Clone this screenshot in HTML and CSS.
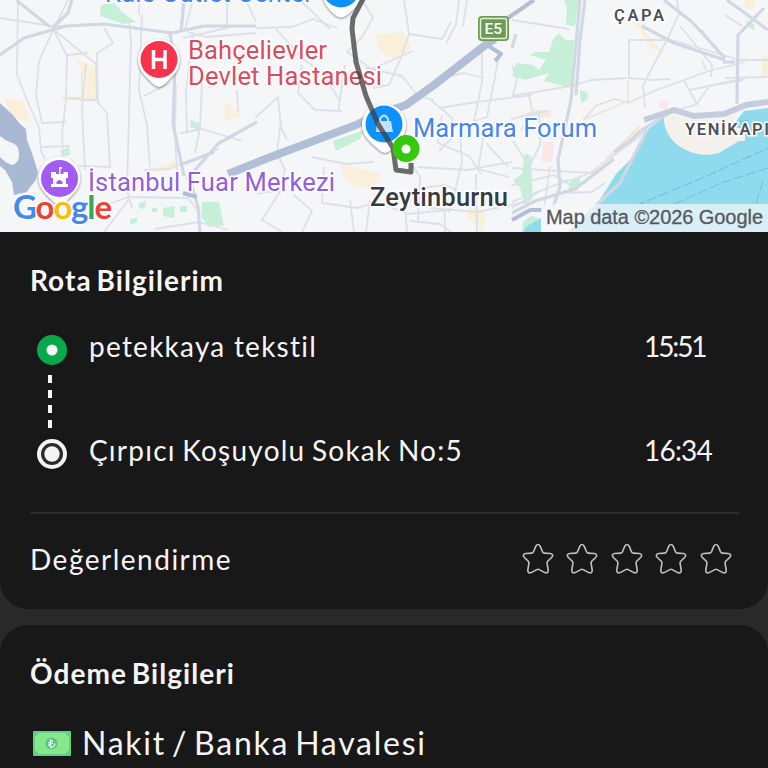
FILE: index.html
```html
<!DOCTYPE html>
<html lang="tr">
<head>
    <meta charset="UTF-8">
    <meta name="viewport" content="width=device-width, initial-scale=1.0">
    <title>Rota Bilgilerim</title>
    <link rel="stylesheet" href="styles.css">
</head>
<body>
    <svg class="map" viewBox="0 0 768 232">
        <rect class="land" width="768" height="232"/>

        <g class="ground">
            <!-- built up areas -->
            <g class="sand">
                <path d="M4 98l18 2 10 22-20-4zM74 56l22 14 2 32-12-2v-22zM225 102l18 14-18 4zM375 35l28-3 9 17-17 11-15-9zM340 164l40 10-8 16-25-8zM153 168l21-6 2 5-21 6zM638 25l15 16 13 14-16-7zM762 55h6v22h-6zM606 157l35-32-2 7-32 27zM470 202l16 12-3 18-16-16zM635 22l11 2-1 6-10-2zM746 0h10l-4 10-9-3z"/>
            </g>
            <path class="pink" d="M533 110h18v7h-18zM543 142h11l-2 20h-10zM660 101h9l-2 8h-8z"/>

            <!-- parks -->
            <g class="park">
                <path d="M101 5l13-2 9 10 13 9-12 2-24-8zM191 120l10 4-2 6-9-3zM60 151l9-4 1 8-8 2zM202 202h17l5 24-15 1-8-10zM163 208l12-2-1 12-11-2zM139 203l7-2-1 8-6-1zM180 206h7v6h-7zM152 208h5v4h-5zM130 219l7-1v5l-7 1z"/>
                <path d="M333 141l31-11-4 9-24 12zM564 0h15l-4 26-9-1 1-17zM553 40l5-7 8 7 8 0-1 43-5 4-24-6 5-8-24 7-13-4 4-13 17 2 6 5 7-10-16-5 5-3 14 0zM580 90l7 2 1 7-6 4-2-6zM525 153l7 4-1 7 2 34-8 7-5-17-7-8 9-6zM570 182l10-6 1 9-8 7-5-1zM745 20l9 4 0 7-6-5zM523 222l8-6 8 2-8 10-9 4z"/>
            </g>

            <!-- sea -->
            <path class="sea" d="M664 117l-17 13-11 24-20 20-8 13-11 17-15 14-14 14h200V108l-24 3-10 13-40 11z"/>
            <path class="sea" d="M527 226l14-8v14h-18z"/>
            <path class="coast" d="M664 116v6q3 18 20 27 17 9 35 4l20-12h6v-13h-8l-4-8 4-7-9 2-10 6-36-3-10-4z"/>
            <path class="ferry" d="M635 206l67-28 66-30M674 204l50-22 44-14M763 181l-7 23M751 130l10-5M739 122l14-3"/>

            <!-- small streets -->
            <g class="street">
                <path d="M18 0l-1 75 12 30 10 22 2 24 4 8M68 0l-15 30-14 31-3 34 6 28 24-1M0 18l52 8 13 0M53 29l14 27-1 43-4 35 1 20M67 55l21-2M86 64l-4 46 3 60M80 100l17 0-1-36-42-34M63 98l18 0M42 147l27-1M104 28l9 15-16 10 1 50 9 10 3 54-31-1M129 22l2 18-4 150 5 18M142 14l-3 76 8 35 3 42M139 0v15M144 96l26-13M193 0l-8 29M176 85l-1 45 2 48M202 83l-2 45-5 25M180 133l22-4 40 12M227 0v28l-44 10M237 90l1 22M144 170l25-1 50-20M104 206l24-9 60 1 8 11M104 232l26-34M155 229l44-7 29 8M193 32l-7 60 1 42M256 33l-49 4-20-5M246 0l10 22"/>
                <path d="M208 88l36-27M255 118l21-19 2-2 3 30 6 13M302 65l-4 28 17 17 27 1M345 65l-7 48M281 120l-4 33 8 17-6 20-22 4M256 28l36-1 21-8 24 9M275 28l28 31 20 14 16 27M300 0l30 29M362 0l11 18-11 19-15 15 25 17 41-18M404 0l5 34-7 21-13 30-16 3M409 34l33 5 9-17M459 0l-3 24-10 20M467 0l-4 26M366 68l36 8 16 20 16 4M431 100l21 18 2 18-15 15M450 76l14-3 20 5M482 52l0 30-8 39 13-4 4-20 8-41M440 108l30-5 62-8M442 115l-4 28 31 13 12 18M418 167l49 3 45-8M405 153l15 24-2 46M460 132l2 31-13 50M484 133l-6 36 31 8M486 143l22 24M476 174l1 58M423 188l22-3 12 5M444 185l1 47M430 208l47 4 49-10M281 190l-19 30 20 12M294 195l18 16-10 21M312 157l34 7 28-2M324 167l-2 36 36 5 17-6M350 199l4 33M370 200l-4 32M384 205l24 9 40-4M405 205l2 27M410 221l30 3 11 8"/>
                <path d="M512 20l57 9M512 65l5 14-4 16M512 96l59-10M571 86l20-6 36-2M628 78l26 2 16-1M629 77V40l43 0 68 20M511 119l36-8M529 96l4 18-12 16M539 110l1 35-10 20M513 141l15 24M583 120l14-15 18-6 13 4 26-12 55-20 36-9M677 0l2 14-12 26-13 24-11 22 2 21M680 26l32 39-1 12M702 60l4 10M684 81l13 23 12-18 34-6M698 104l-27 8M738 60h30M725 15l17 11M702 30l16 22M512 185l42-10 24 15M512 168l78 5 27-20 22-16 13-14M512 208l30-18 46-16M550 166l-6 43M562 193l30-1 13-9M690 90l56-12M725 78l42-1M512 202l56-22"/>
            </g>
            <g class="street tan">
                <path d="M64 99h30M82 71v28M628 81v20l-45 19M530 97l2 15-20 7M592 174l47-47"/>
            </g>

            <!-- main roads -->
            <g class="avenue">
                <path d="M0 55l24-17 42-12 38-2 68 9 32-7h52M52 28l16-15 4-13M50 27l-34-27M170 34l5 30-2 60 11 52M184 0l-3 32M180 165l32-12 2-1M187 179l32-36 38-21M192 186l6 21 2 25M580 0l-9 100-13 60 2 27-7 20M585 0l-5 40-4 55M512 48l4-14M642 26l32 17 51 17M664 0l28 22 33 36M727 0l41 30M764 8l-26 27-1 69M735 62h-12M590 211l30-28 27-53M614 152l16-11 13-12 25-15M512 213l23-12 40-12 39-30"/>
                <path class="thick" d="M644 120l30-10 20 6 30-2 22-9 22-3"/>
            </g>
            <path class="junction" d="M0 103l13 12 7 9 6 5 1 11 5 13 6 19-2 8-6 7-3 5-13 3-2-13-7-12-5-4v-9q8 8 13 8 7-3 6-13-1-8-9-10-6-2-10-6v-13z"/>
            <path class="highway" d="M228 174l40-16 88-33 18-9 32-11 28-20 54-42 7-4"/>
            <path class="highway thin" d="M484 43l17 11-6 7M508 18l26-18M512 220l18-10h12M183 193l14 4"/>
        </g>

        <!-- hospital -->
        <path class="pin" d="M159 39c-12 0-21 9-21 21 0 10 7 16 15 24q6 6 12 0c8-8 15-14 15-24 0-12-9-21-21-21z"/>
        <circle class="red" cx="159" cy="59.500" r="18.500"/>
        <path class="glyph-line" d="M153.500 50v19M165 50v19M153 59.500h12"/>

        <!-- fair center -->
        <path class="pin" d="M59.500 157c-12 0-21 9-21 21 0 10 7 16 15 24q6 6 12 0c8-8 15-14 15-24 0-12-9-21-21-21z"/>
        <circle class="purple" cx="59.500" cy="178.500" r="18.500"/>
        <path class="white" d="M51 172h5v2h3v-7h3v2h-1.500v5h3v-2h4.500v6h-2v6h2v3h-17v-3h2v-6h-2z"/>
        <path class="purple" d="M56.500 184v-2q3-4 6 0v2z"/>

        <!-- malls -->
        <path class="pin" d="M321-10q2 16 14 25 6 5 12 0 14-10 16-25z"/>
        <circle class="blue" cx="341" cy="-11" r="18.500"/>
        <path class="pin" d="M384 104c-13 0-22 9-22 21 0 11 9 18 17 25q6 6 12 0c8-7 15-14 15-25 0-12-9-21-22-21z"/>
        <circle class="blue" cx="384" cy="124" r="18.500"/>
        <path class="bag" d="M377 121h14l2 11h-17z"/>
        <path class="bag-handle" d="M380 122v-3q4-7 8 0v3"/>

        <g class="label">
            <text class="blue-text" x="105" y="2" textLength="208">Kale Outlet Center</text>
            <text class="red-text" x="188" y="59" textLength="139">Bahçelievler</text>
            <text class="red-text" x="188" y="85" textLength="194">Devlet Hastanesi</text>
            <text class="purple-text" x="88" y="191" textLength="247">İstanbul Fuar Merkezi</text>
            <text class="blue-text" x="413" y="137" textLength="184">Marmara Forum</text>
            <text class="town" x="370" y="206" textLength="138">Zeytinburnu</text>
            <text class="district" x="614" y="21" textLength="50">ÇAPA</text>
            <text class="district" x="685" y="135" textLength="84">YENİKAPI</text>
        </g>

        <rect class="shield" x="478" y="16" width="31" height="25" rx="4"/>
        <rect class="shield-line" x="480.500" y="18.500" width="26" height="20" rx="2"/>
        <text class="shield-text" x="484.500" y="34">E5</text>

        <path class="route" d="M363-1L353 18l-1 11 4 33 10 34 12 28 15 24 3 22 15 2v-9"/>
        <circle class="green" cx="406" cy="148.500" r="13.500"/>
        <circle class="white" cx="406" cy="149" r="4.500"/>

        <text class="google" x="13" y="219" textLength="99"><tspan class="g-blue">G</tspan><tspan class="g-red">o</tspan><tspan class="g-yellow">o</tspan><tspan class="g-blue">g</tspan><tspan class="g-green">l</tspan><tspan class="g-red">e</tspan></text>

        <rect class="credit-box" x="541" y="204" width="227" height="28"/>
        <text class="credit" x="546" y="224" textLength="217">Map data ©2026 Google</text>
    </svg>

    <div class="card route-card">
        <h2>Rota Bilgilerim</h2>
        <div class="stop">
            <svg class="dot" viewBox="0 0 30 30">
                <circle cx="15" cy="15" r="15" fill="#09a84b"/>
                <circle cx="15" cy="15" r="5.500" fill="#f5f5f5"/>
            </svg>
            <span class="place start">petekkaya tekstil</span>
            <span class="time early">15:51</span>
        </div>
        <div class="dashes"><i></i><i></i><i></i><i></i></div>
        <div class="stop">
            <svg class="dot" viewBox="0 0 30 30">
                <circle cx="15" cy="15" r="15" fill="#f5f5f5"/>
                <circle cx="15" cy="15" r="11" fill="#2b2b2b"/>
                <circle cx="15" cy="15" r="7.700" fill="#f5f5f5"/>
            </svg>
            <span class="place end">Çırpıcı Koşuyolu Sokak No:5</span>
            <span class="time late">16:34</span>
        </div>
        <div class="rating">
            <span class="rating-text">Değerlendirme</span>
            <div class="stars">
                <svg viewBox="0 0 32 32"><use href="#star"/></svg>
                <svg viewBox="0 0 32 32"><use href="#star"/></svg>
                <svg viewBox="0 0 32 32"><use href="#star"/></svg>
                <svg viewBox="0 0 32 32"><use href="#star"/></svg>
                <svg viewBox="0 0 32 32"><use href="#star"/></svg>
            </div>
        </div>
    </div>

    <div class="card pay-card">
        <h2>Ödeme Bilgileri</h2>
        <div class="payment">
            <svg class="cash" viewBox="0 0 38 25">
                <rect width="38" height="25" rx="1" fill="#5fd084"/>
                <path d="M5 2h28q0 3 3 3v15q-3 0-3 3H5q0-3-3-3V5q3 0 3-3z" fill="#86e78b"/>
                <circle cx="18.500" cy="12.500" r="6" fill="#56c485"/>
                <path d="M17.500 8v8.500q4 0 4.500-4M15 12l5-2.500M15 14.500l5-2.500" fill="none" stroke="#effff2" stroke-width="1.300"/>
            </svg>
            <span class="pay-text">Nakit / Banka Havalesi</span>
        </div>
    </div>

    <svg width="0" height="0" class="symbols">
        <symbol id="star" viewBox="0 0 32 32">
            <path d="M13.800 3.200Q16-.3 18.200 3.200L20.500 8.800Q21 10 22.200 10.100L28.300 10.500Q32.300 11.300 29.600 14.500L25.700 18.200Q24.900 19.100 25.100 20.300L26.200 27Q26.300 31 22.800 29.600L17.200 26.600Q16 26 14.800 26.600L9.200 29.600Q5.700 31 5.800 27L6.900 20.300Q7.100 19.100 6.300 18.200L2.400 14.500Q-.3 11.300 3.700 10.500L9.800 10.100Q11 10 11.500 8.800Z"/>
        </symbol>
    </svg>
</body>
</html>
```
FILE: styles.css
```css
html, body{
    height: 100%;
}

body{
    margin: 0;
    display: flex;
    flex-direction: column;
    overflow: hidden;
    background-color: #292929;
    color: #f5f5f5;
    font-family: Lato, "Noto Sans", sans-serif;
    font-size: 28px;
    line-height: 34px;
}

/* map */
.map{
    display: block;
    width: 100%;
    height: 232px;
    flex: none;
}

.ground{ filter: blur(0.6px); }
.land{ fill: #f5f6f8; }
.sand{ fill: #faefd9; }
.pink{ fill: #fae6e6; }
.park{ fill: #c5f0d7; }
.sea{ fill: #90daee; }
.coast{ fill: #f4f1ec; }
.ferry{
    fill: none;
    stroke: #73c4de;
    stroke-width: 1.2;
    stroke-dasharray: 10 3;
}

.street{
    fill: none;
    stroke: #dce1e9;
    stroke-width: 1.8;
    stroke-linejoin: round;
}
.tan{ stroke: #eee4d8; }

.avenue{
    fill: none;
    stroke: #d0d8e4;
    stroke-width: 3.2;
    stroke-linejoin: round;
}
.thick{
    stroke: #c3cddd;
    stroke-width: 6;
}
.junction{ fill: #a9b9d3; }

.highway{
    fill: none;
    stroke: #b0bed6;
    stroke-width: 8;
    stroke-linejoin: round;
}
.thin{ stroke-width: 4; }

.pin{
    fill: #fff;
    filter: drop-shadow(0 1px 1px rgba(0, 0, 0, 0.45));
}
.red{ fill: #f9334c; }
.purple{ fill: #a25bf3; }
.blue{ fill: #0e91fa; }
.green{ fill: #35c90b; }
.white{ fill: #fff; }

.glyph-line{
    fill: none;
    stroke: #fff;
    stroke-width: 3.5;
}
.bag{ fill: #c4e2fb; }
.bag-handle{
    fill: none;
    stroke: #c4e2fb;
    stroke-width: 2;
}

.label text{
    font-family: Roboto, sans-serif;
    font-size: 25.5px;
    stroke: #fff;
    stroke-width: 3px;
    stroke-linejoin: round;
    paint-order: stroke;
}
.label .blue-text{ fill: #4484ed; }
.label .red-text{ fill: #d84d5e; }
.label .purple-text{ fill: #9060dc; }
.label .town{
    fill: #373b40;
    font-weight: 500;
}
.label .district{
    fill: #4d5157;
    font-size: 16.5px;
    font-weight: 600;
}

.shield{ fill: #6c9b52; }
.shield-line{
    fill: none;
    stroke: #e3efdc;
    stroke-width: 1.5;
}
.shield-text{
    font-family: Roboto, sans-serif;
    font-size: 15.5px;
    font-weight: 500;
    fill: #fff;
}

.route{
    fill: none;
    stroke: #3c3c3c;
    stroke-opacity: 0.75;
    stroke-width: 5;
    stroke-linejoin: round;
}

.google{
    font-family: Lato, sans-serif;
    font-size: 33px;
    font-weight: 700;
    stroke: #fff;
    stroke-width: 3px;
    paint-order: stroke;
}
.g-blue{ fill: #4688f1; }
.g-red{ fill: #e94435; }
.g-yellow{ fill: #fabd07; }
.g-green{ fill: #34a853; }

.credit-box{
    fill: #f5f6f8;
    fill-opacity: 0.72;
}
.credit{
    font-family: "Liberation Sans", sans-serif;
    font-size: 20px;
    fill: #55595d;
    stroke: #55595d;
    stroke-width: 0.3;
}

/* cards */
.card{
    box-sizing: border-box;
    flex: none;
    background-color: #181818;
    padding: 0 29px 0 30px;
}

.route-card{
    height: 377px;
    padding-top: 31px;
    border-radius: 0 0 28px 28px;
}

h2{
    margin: 0;
    font-size: 28px;
    line-height: 34px;
    font-weight: 700;
    letter-spacing: 1.05px;
    word-spacing: -3px;
}

.stop{
    display: flex;
    align-items: center;
    height: 34px;
    padding-left: 7px;
}

h2 + .stop{
    margin-top: 32px;
}

.dot{
    width: 30px;
    height: 30px;
    margin-top: 7px;
    flex: none;
}

.place{
    flex: 1;
    padding-left: 22px;
    white-space: nowrap;
}

.start{ letter-spacing: 1.25px; }
.end{
    letter-spacing: 1.25px;
    word-spacing: -2px;
}

.time{
    width: 95px;
}

.early{ letter-spacing: -2.1px; }
.late{ letter-spacing: -0.8px; }

.dashes{
    display: flex;
    flex-direction: column;
    gap: 7px;
    height: 53px;
    padding: 12px 0 5px 18px;
}

.dashes i{
    width: 4px;
    height: 8px;
    background-color: #f5f5f5;
}

.rating{
    display: flex;
    align-items: center;
    justify-content: space-between;
    height: 90px;
    margin-top: 45px;
    border-top: 2px solid #2b2b2b;
}

.rating-text{ letter-spacing: 1.5px; }

.stars{
    display: flex;
    gap: 12.6px;
    padding-right: 7px;
}

.stars svg{
    width: 32px;
    height: 32px;
    fill: none;
    stroke: #c2c2c2;
    stroke-width: 1.6;
}

.pay-card{
    flex: 1;
    margin-top: 16px;
    padding-top: 31px;
    border-radius: 28px 28px 0 0;
}

.payment{
    display: flex;
    align-items: center;
    height: 40px;
    margin-top: 33px;
    padding-left: 3px;
    font-size: 32px;
}

.pay-text{
    letter-spacing: 1.75px;
    word-spacing: -4px;
}

.cash{
    width: 38px;
    height: 25px;
    margin-right: 11px;
}

.symbols{
    position: absolute;
}
```
